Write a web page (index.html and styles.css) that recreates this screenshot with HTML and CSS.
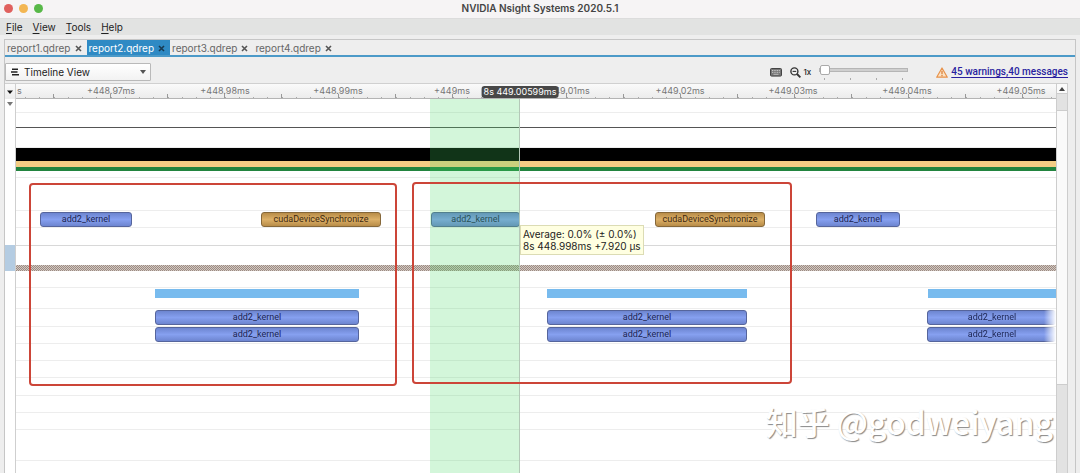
FILE: index.html
```html
<!DOCTYPE html>
<html lang="en">
<head>
<meta charset="utf-8">
<title>NVIDIA Nsight Systems 2020.5.1</title>
<link rel="stylesheet" href="styles.css">
</head>
<body class="window">
<header class="titlebar">
  <div class="lights">
    <button class="light light-close" aria-label="Close"></button>
    <button class="light light-min" aria-label="Minimize"></button>
    <button class="light light-max" aria-label="Zoom"></button>
  </div>
  <h1 class="title">NVIDIA Nsight Systems 2020.5.1</h1>
</header>
<nav class="menubar">
  <button class="menu"><u>F</u>ile</button>
  <button class="menu"><u>V</u>iew</button>
  <button class="menu"><u>T</u>ools</button>
  <button class="menu"><u>H</u>elp</button>
</nav>
<main class="panel">
  <div class="tabs">
    <div class="tab"><button class="tab-name">report1.qdrep</button><button class="tab-close" aria-label="Close report1"><svg viewBox="0 0 7 7"><path d="M1 1l5 5M6 1l-5 5"/></svg></button></div>
    <div class="tab tab-active"><button class="tab-name">report2.qdrep</button><button class="tab-close" aria-label="Close report2"><svg viewBox="0 0 7 7"><path d="M1 1l5 5M6 1l-5 5"/></svg></button></div>
    <div class="tab"><button class="tab-name">report3.qdrep</button><button class="tab-close" aria-label="Close report3"><svg viewBox="0 0 7 7"><path d="M1 1l5 5M6 1l-5 5"/></svg></button></div>
    <div class="tab"><button class="tab-name">report4.qdrep</button><button class="tab-close" aria-label="Close report4"><svg viewBox="0 0 7 7"><path d="M1 1l5 5M6 1l-5 5"/></svg></button></div>
  </div>
  <div class="toolbar">
    <div class="picker">
      <select class="picker-select" aria-label="View"><option>Timeline View</option></select>
      <svg class="picker-icon" viewBox="0 0 8 8"><path d="M1 1.2h6M0 4h6.5M1 6.8h7" stroke="#222" stroke-width="1.5"/></svg>
      <svg class="picker-arrow" viewBox="0 0 6 4"><path d="M0 0h6L3 4z" fill="#555"/></svg>
    </div>
    <div class="tools">
      <button class="icon-button" aria-label="Keyboard shortcuts">
        <svg width="12" height="9" viewBox="0 0 12 9"><rect x=".5" y=".5" width="11" height="7.6" rx="1" fill="#777" stroke="#444"/><path d="M2 2.5h8M2 4.3h8" stroke="#ddd" stroke-width=".8" stroke-dasharray="1 .7"/><path d="M3.5 6.3h5" stroke="#ccc" stroke-width=".8"/></svg>
      </button>
      <button class="icon-button" aria-label="Zoom out">
        <svg width="11" height="11" viewBox="0 0 11 11" fill="none" stroke="#333"><circle cx="4.4" cy="4.4" r="3.5" stroke-width="1.4"/><path d="M2.6 4.4h3.6" stroke-width="1.1"/><path d="M7 7l3.4 3.4" stroke-width="1.8"/></svg>
      </button>
      <label class="zoom-label" for="zoom">1x</label>
      <div class="zoom">
        <input class="zoom-range" id="zoom" type="range" min="0" max="3" value="0">
        <div class="zoom-marks"><i></i><i></i><i></i><i></i></div>
      </div>
      <svg class="warn" viewBox="0 0 12 11"><path d="M6 1L11.3 10.2H.7z" fill="#fbe3c6" stroke="#e8924a" stroke-width="1.2" stroke-linejoin="round"/><path d="M6 3.8v3.4M6 8v1.2" stroke="#d97a30" stroke-width="1.2"/></svg>
      <a class="messages" href="#">45 warnings,40 messages</a>
    </div>
  </div>
  <section class="timeline">
    <div class="gutter">
      <div class="gutter-head"><svg class="caret" viewBox="0 0 6 4"><path d="M0 .5h6L3 4z" fill="#111"/></svg></div>
      <svg class="caret caret-row" viewBox="0 0 6 4"><path d="M0 0h6L3 4z" fill="#777"/></svg>
      <div class="gutter-selected"></div>
    </div>
    <div class="view">
      <div class="ruler">
        <svg class="ticks" viewBox="0 0 1040 5" preserveAspectRatio="none" fill="none" stroke="#aaa"><path d="M9 4.5H1040" stroke-width="2" stroke-dasharray="1 13.25"/><path d="M37 3H1040" stroke-width="4" stroke="#999" stroke-dasharray="1 56"/></svg>
        <span class="stamp stamp-first">s</span>
        <span class="stamp" style="--at:95">+448.97ms</span>
        <span class="stamp" style="--at:209">+448.98ms</span>
        <span class="stamp" style="--at:322">+448.99ms</span>
        <span class="stamp" style="--at:436">+449ms</span>
        <span class="stamp" style="--at:550">+449.01ms</span>
        <span class="stamp" style="--at:664">+449.02ms</span>
        <span class="stamp" style="--at:777">+449.03ms</span>
        <span class="stamp" style="--at:891">+449.04ms</span>
        <span class="stamp" style="--at:1005">+449.05ms</span>
        <span class="cursor-time" style="--at:504">8s 449.00599ms</span>
      </div>
      <div class="lanes">
        <div class="lane lane-14"></div>
        <div class="lane lane-15 lane-dark"></div>
        <div class="lane lane-20"></div>
        <div class="band band-black"></div>
        <div class="band band-amber"></div>
        <div class="band band-green"></div>
        <div class="lane lane-7"></div>
        <div class="lane lane-33"></div>
        <div class="lane lane-17 lane-padded">
          <div class="event event-blue" style="--at:24;--span:92">add2_kernel</div>
          <div class="event event-gold" style="--at:245;--span:120">cudaDeviceSynchronize</div>
          <div class="event event-blue" style="--at:415;--span:89">add2_kernel</div>
          <div class="event event-gold" style="--at:639;--span:110">cudaDeviceSynchronize</div>
          <div class="event event-blue" style="--at:800;--span:84">add2_kernel</div>
        </div>
        <div class="lane lane-18 lane-strong"></div>
        <div class="lane lane-42"><div class="hatch"></div></div>
        <div class="lane lane-21 lane-padded">
          <div class="usage" style="--at:139;--span:204"></div>
          <div class="usage" style="--at:531;--span:200"></div>
          <div class="usage" style="--at:912;--span:128"></div>
        </div>
        <div class="lane lane-18 lane-padded">
          <div class="event event-blue" style="--at:139;--span:204">add2_kernel</div>
          <div class="event event-blue" style="--at:531;--span:200">add2_kernel</div>
          <div class="event event-blue event-open" style="--at:911;--span:129">add2_kernel</div>
        </div>
        <div class="lane lane-17">
          <div class="event event-blue" style="--at:139;--span:204">add2_kernel</div>
          <div class="event event-blue" style="--at:531;--span:200">add2_kernel</div>
          <div class="event event-blue event-open" style="--at:911;--span:129">add2_kernel</div>
        </div>
        <div class="lane lane-17"></div>
        <div class="lane lane-17"></div>
        <div class="lane lane-18"></div>
        <div class="lane lane-17"></div>
        <div class="lane lane-17"></div>
        <div class="lane lane-31"></div>
        <div class="selection" style="--at:414;--span:90"></div>
        <div class="frame frame-first" style="--at:13;--span:368"></div>
        <div class="frame frame-second" style="--at:396;--span:380"></div>
        <div class="tooltip" style="--at:504">Average: 0.0% (± 0.0%)<br>8s 448.998ms +7.920 µs</div>
        <div class="watermark">知乎 @godweiyang</div>
      </div>
    </div>
    <div class="scrollbar">
      <button class="scroll-up" aria-label="Scroll up"><svg class="caret" viewBox="0 0 6 4"><path d="M0 4h6L3 0z" fill="#444"/></svg></button>
      <div class="scroll-before"></div>
      <div class="scroll-thumb"></div>
      <div class="scroll-after"></div>
    </div>
  </section>
</main>
</body>
</html>
```
FILE: styles.css
```css
* { box-sizing: border-box; }

.window {
  margin: 0;
  min-height: 100vh;
  display: flex;
  flex-direction: column;
  background: #eeeeee;
  color: #222;
  font: 10px/12px Inter, "Liberation Sans", sans-serif;
}

button {
  margin: 0;
  padding: 0;
  border: 0;
  background: none;
  color: inherit;
  font: inherit;
}

svg { display: block; }

.titlebar {
  position: relative;
  height: 19px;
  background: #f6f4f5;
  border-bottom: 1px solid #dcdcdc;
}

.lights { display: flex; gap: 6px; padding: 4px; }
.light { width: 9px; height: 9px; border-radius: 50%; }
.light-close { background: #e0605e; }
.light-min { background: #f3b652; }
.light-max { background: #58b848; }

.title {
  position: absolute;
  inset: 0;
  margin: 0;
  text-align: center;
  font-size: 10px;
  line-height: 16px;
  font-weight: 600;
  color: #444;
  pointer-events: none;
}

.menubar {
  display: flex;
  gap: 10px;
  height: 16px;
  padding-left: 6px;
  background: #e2e3e2;
}
.menu { line-height: 16px; text-underline-offset: 2px; }

.panel {
  flex: 1;
  display: flex;
  flex-direction: column;
  margin: 4px 4px 0;
  border: 1px solid #c6c6c6;
  border-bottom: 0;
}

.tabs {
  display: flex;
  height: 17px;
  border-bottom: 2px solid #4c9ac8;
  color: #666;
}
.tab {
  display: flex;
  align-items: center;
  gap: 4px;
  padding: 1px 5px 0 2px;
}
.tab-active { background: #2f8ac4; color: #fff; }
.tab-close svg { width: 7px; height: 7px; fill: none; stroke: #555; stroke-width: 1.6; }
.tab-active .tab-close svg { stroke: #183a52; }

.toolbar {
  display: flex;
  justify-content: space-between;
  align-items: center;
  height: 26px;
  padding: 4px 7px 0 0;
}

.picker { position: relative; width: 146px; }
.picker-select {
  appearance: none;
  display: block;
  width: 100%;
  height: 18px;
  padding: 0 20px 0 18px;
  border: 1px solid #b9b9b9;
  border-radius: 1px;
  background: linear-gradient(#ffffff, #f2f2f2);
  color: #222;
  font: inherit;
}
.picker-icon { position: absolute; left: 6px; top: 5px; width: 8px; height: 8px; }
.picker-arrow { position: absolute; right: 5px; top: 7px; width: 6px; height: 4px; }

.tools { display: flex; align-items: center; }
.icon-button { margin-right: 8px; }
.zoom-label { margin-left: -5px; margin-right: 8px; font-size: 8px; font-weight: 500; }

.zoom { width: 89px; margin-right: 28px; }
.zoom-range {
  appearance: none;
  display: block;
  width: 100%;
  height: 10px;
  margin: 0;
  background: none;
}
.zoom-range::-webkit-slider-runnable-track {
  height: 4px;
  border: 1px solid #b5b5b5;
  background: #cfcfcf;
}
.zoom-range::-webkit-slider-thumb {
  appearance: none;
  width: 10px;
  height: 10px;
  margin-top: -4px;
  border: 1px solid #aaa;
  border-radius: 2px;
  background: #fff;
}
.zoom-marks { display: flex; justify-content: space-between; padding: 3px 5px 0; }
.zoom-marks i { width: 1px; height: 2px; background: #aaa; }

.warn { width: 12px; height: 11px; margin-right: 3px; }
.messages { color: #2a1fa0; font: 500 10px/12px Roboto, sans-serif; text-underline-offset: 2px; }

.timeline { flex: 1; display: flex; padding-right: 7px; }

.gutter {
  width: 11px;
  border-right: 1px solid #cfcfcf;
  background: #fff;
}
.gutter-head {
  height: 16px;
  padding-top: 6px;
  border-top: 1px solid #d0d0d0;
  background: linear-gradient(#fafafa, #ececec);
}
.caret { width: 6px; height: 4px; margin: 0 auto; }
.caret-row { margin-top: 3px; }
.gutter-selected { height: 26px; margin-top: 139px; background: #b4cce2; }

.view { flex: 1; min-width: 0; display: flex; flex-direction: column; }

.ruler {
  position: relative;
  z-index: 1;
  height: 16px;
  border-top: 1px solid #d0d0d0;
  border-bottom: 1px solid #b4b4b4;
  background: linear-gradient(#fafafa, #ececec);
  color: #777;
  font-size: 9px;
}
.ticks { position: absolute; left: 0; bottom: 0; width: 100%; height: 5px; shape-rendering: crispEdges; }
.stamp {
  position: absolute;
  top: 1px;
  left: calc(var(--at) / 1040 * 100%);
  transform: translateX(-50%);
}
.stamp-first { left: 1px; transform: none; }
.cursor-time {
  position: absolute;
  top: 2px;
  left: calc(var(--at) / 1040 * 100%);
  transform: translateX(-50%);
  padding: 0 2px;
  border-radius: 3px;
  background: #484848;
  color: #fff;
  white-space: nowrap;
}

.lanes { position: relative; flex: 1; background: #fff; overflow: hidden; }
.lane { position: relative; border-bottom: 1px solid #ededed; }
.lane-padded { padding-top: 1px; }
.lane-dark { border-color: #555; }
.lane-strong { border-color: #d8d8d8; }
.lane-7 { height: 7px; }
.lane-14 { height: 14px; }
.lane-15 { height: 15px; }
.lane-17 { height: 17px; }
.lane-18 { height: 18px; }
.lane-20 { height: 20px; }
.lane-21 { height: 21px; }
.lane-31 { height: 31px; }
.lane-33 { height: 33px; }
.lane-42 { height: 42px; padding-top: 19px; }

.band-black { height: 13px; background: #000; }
.band-amber { height: 6px; background: #f4cd85; }
.band-green { height: 4px; background: #22843f; }
.hatch {
  height: 6px;
  background: repeating-conic-gradient(#9c8b82 0 25%, #d2c8c2 0 50%) 0 0 / 2px 2px;
}

.event, .usage {
  position: absolute;
  left: calc(var(--at) / 1040 * 100%);
  width: calc(var(--span) / 1040 * 100%);
}
.event {
  height: 15px;
  border: 1px solid #555;
  border-radius: 3px;
  text-align: center;
  font: 9px/13px Roboto, sans-serif;
  color: #1c2450;
}
.event-blue { border-color: #56659c; background: linear-gradient(#6d85d0, #86a0f0 50%, #6d85d0); }
.event-gold { border-color: #86683a; background: linear-gradient(#b88c48, #dcb068 50%, #b88c48); color: #40290f; }
.event-open { border-right: 0; mask-image: linear-gradient(to left, transparent, #000 12px); }
.usage { height: 9px; background: #78bbee; }

.selection {
  position: absolute;
  top: 0;
  bottom: 0;
  left: calc(var(--at) / 1040 * 100%);
  width: calc(var(--span) / 1040 * 100%);
  border-right: 1px solid #b4c8b8;
  background: rgba(71, 217, 100, 0.24);
}

.frame {
  position: absolute;
  left: calc(var(--at) / 1040 * 100%);
  width: calc(var(--span) / 1040 * 100%);
  border: 2px solid #cc4538;
  border-radius: 4px;
}
.frame-first { top: 84px; height: 203px; }
.frame-second { top: 83px; height: 202px; }

.tooltip {
  position: absolute;
  top: 126px;
  left: calc(var(--at) / 1040 * 100%);
  padding: 2px;
  border: 1px solid #dcdcb4;
  background: #ffffe1;
  white-space: nowrap;
}

.watermark {
  position: absolute;
  right: 3px;
  bottom: 32px;
  color: #fff;
  font: 500 32px/40px "Noto Sans CJK SC", sans-serif;
  text-shadow: 1px 1px 1px #888;
  white-space: nowrap;
}

.scrollbar {
  display: flex;
  flex-direction: column;
  width: 12px;
  border: 1px solid #cdcdcd;
  border-bottom: 0;
}
.scroll-up { height: 10px; background: #fafafa; border-bottom: 1px solid #cdcdcd; }
.scroll-before { height: 17px; background: #e2e2e2; border-bottom: 1px solid #cdcdcd; }
.scroll-thumb { flex: 275; background: #fafafa; border-bottom: 1px solid #cdcdcd; }
.scroll-after { flex: 88; background: #e2e2e2; }
```
